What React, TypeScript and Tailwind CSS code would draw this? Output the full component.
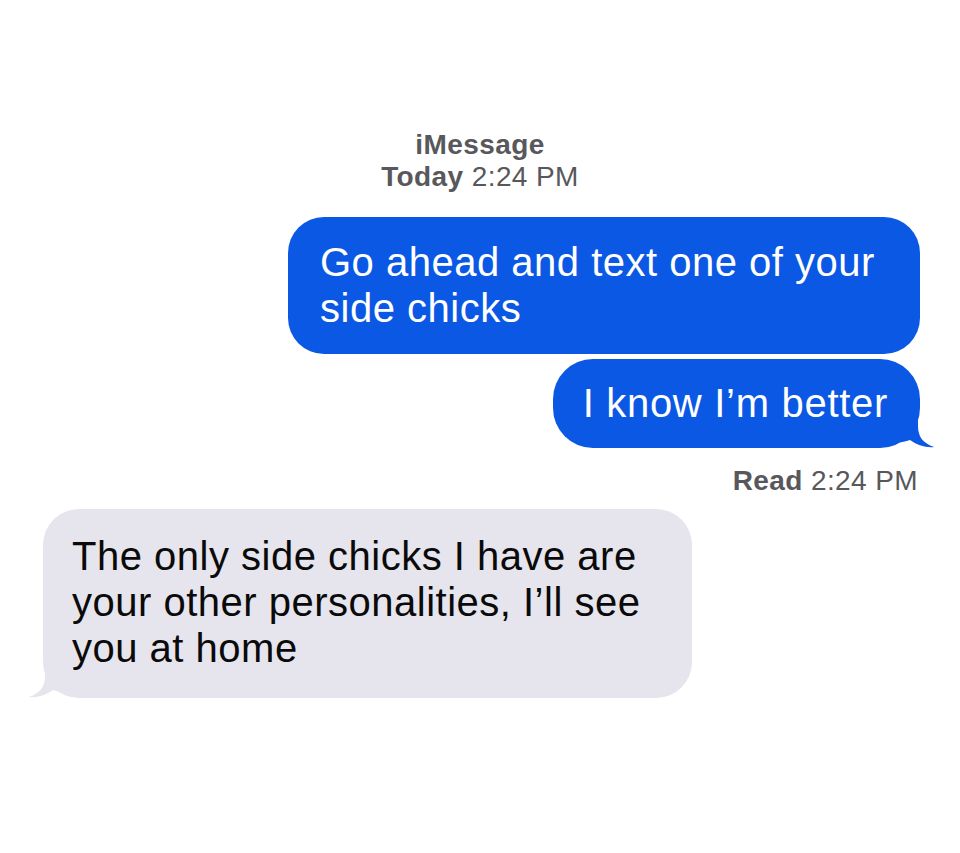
import React from "react";

function BlueTail() {
  return (
    <svg
      className="absolute right-[-15px] bottom-0"
      width="45"
      height="36"
      viewBox="0 0 45 36"
    >
      <path
        d="M0 0 L28 0 L28 14 C28 25 33 31 44 35 C36 36 27 33 20 28 C15 30 8 31 0 31 Z"
        fill="#0b58e4"
      />
    </svg>
  );
}

function GreyTail() {
  return (
    <svg
      className="absolute left-[-15px] bottom-0"
      width="45"
      height="36"
      viewBox="0 0 45 36"
    >
      <path
        d="M45 0 L17 0 L17 14 C17 25 12 31 1 35 C9 36 18 33 25 28 C30 30 37 31 45 31 Z"
        fill="#e6e4ec"
      />
    </svg>
  );
}

export default function App() {
  return (
    <div className="w-[960px] h-[853px] bg-white flex flex-col font-['Liberation_Sans',Arial,sans-serif] overflow-hidden">
      <div className="pt-[129px] flex flex-col items-center text-[28px] leading-[32px] text-[#58585c] tracking-[0.4px]">
        <div className="font-bold">iMessage</div>
        <div>
          <span className="font-bold">Today</span> 2:24 PM
        </div>
      </div>

      <div className="mt-[24px] flex flex-col items-end pr-[40px] gap-[5px]">
        <div className="relative w-[632px] bg-[#0b58e4] text-white rounded-[36px] pl-[32px] pr-[30px] pt-[22px] pb-[23px] text-[40px] leading-[46px] tracking-[0.5px]">
          Go ahead and text one of your side chicks
        </div>
        <div className="relative bg-[#0b58e4] text-white rounded-[40px] pl-[30px] pr-[32px] pt-[21px] pb-[22px] text-[40px] leading-[46px] tracking-[0.7px]">
          I know I’m better
          <BlueTail />
        </div>
      </div>

      <div className="mt-[17px] pr-[42px] text-right text-[28px] leading-[32px] text-[#58585c] tracking-[0.4px]">
        <span className="font-bold">Read</span> 2:24 PM
      </div>

      <div className="mt-[12px] ml-[43px] w-[649px]">
        <div className="relative bg-[#e6e4ec] text-[#0a0a0a] rounded-[36px] pl-[29px] pr-[20px] pt-[24px] pb-[27px] text-[40px] leading-[46px] tracking-[0.5px]">
          The only side chicks I have are your other personalities, I’ll see you at home
          <GreyTail />
        </div>
      </div>
    </div>
  );
}
